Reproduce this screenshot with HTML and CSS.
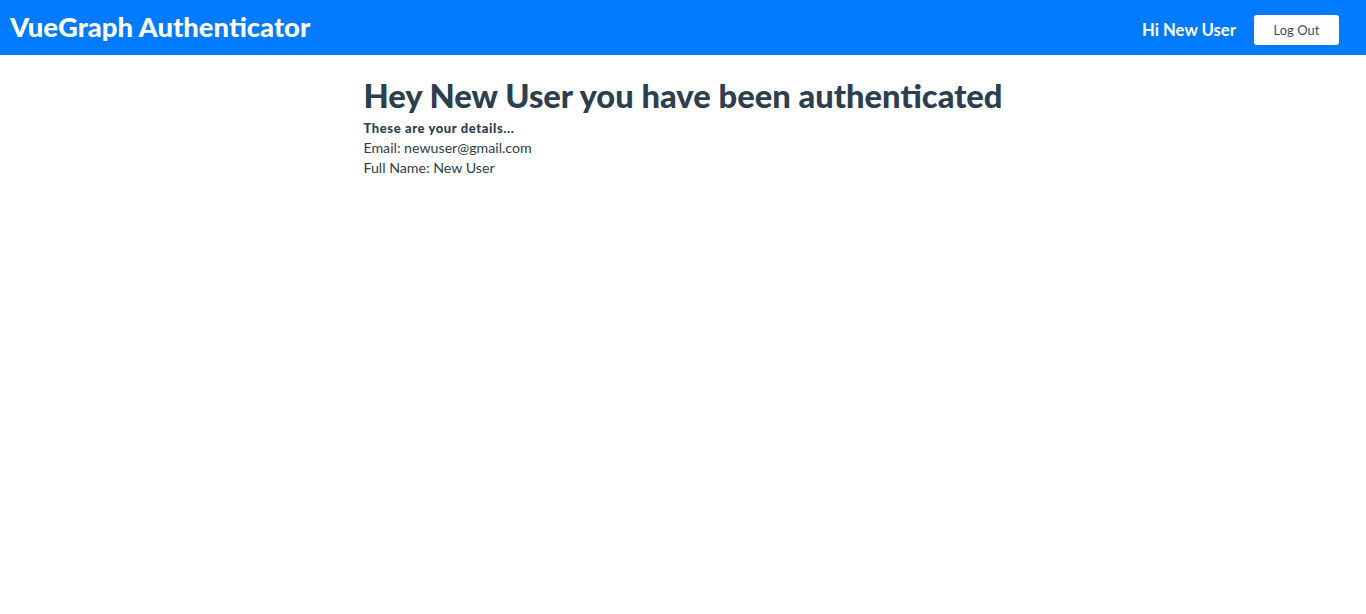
FILE: index.html
```html
<!DOCTYPE html>
<html lang="en">
<head>
<meta charset="utf-8">
<title>VueGraph Authenticator</title>
<link rel="stylesheet" href="styles.css">
</head>
<body>
<nav class="navbar">
  <a class="brand" href="#">VueGraph Authenticator</a>
  <div class="nav-right">
    <span class="greeting">Hi New User</span>
    <button class="logout" type="button">Log Out</button>
  </div>
</nav>
<main class="main">
  <div class="details">
    <h1 class="title">Hey New User you have been authenticated</h1>
    <p class="subtitle">These are your details...</p>
    <p class="line">Email: newuser@gmail.com</p>
    <p class="line">Full Name: New User</p>
  </div>
</main>
</body>
</html>
```
FILE: styles.css
```css
* { box-sizing: border-box; }
html, body { margin: 0; padding: 0; }
body {
  font-family: Lato, "Open Sans", sans-serif;
  color: #2c3e50;
  background: #fff;
}
.navbar {
  height: 55px;
  background: #007bff;
  display: flex;
  align-items: center;
  justify-content: space-between;
  padding: 0 27px 0 10px;
}
.brand {
  color: #fff;
  text-decoration: none;
  font-weight: 900;
  font-size: 27.4px;
  margin-top: -2px;
}
.nav-right {
  display: flex;
  align-items: center;
  gap: 18px;
  padding-top: 5px;
}
.greeting {
  color: #fff;
  font-weight: 700;
  font-size: 16.7px;
}
.logout {
  background: #fff;
  border: none;
  border-radius: 3px;
  width: 85px;
  height: 30px;
  font-family: inherit;
  font-size: 13px;
  color: #4a4a5a;
  padding: 0;
}
.main {
  display: flex;
  justify-content: center;
  padding-top: 22px;
}
.details { text-align: left; }
.title {
  margin: 0 0 3px;
  font-size: 32.7px;
  font-weight: 900;
  line-height: 38px;
}
.subtitle {
  margin: 0;
  font-size: 13px;
  letter-spacing: 0.6px;
  font-weight: 900;
  line-height: 20px;
}
.line {
  margin: 0;
  font-size: 14.2px;
  line-height: 20px;
}
```
